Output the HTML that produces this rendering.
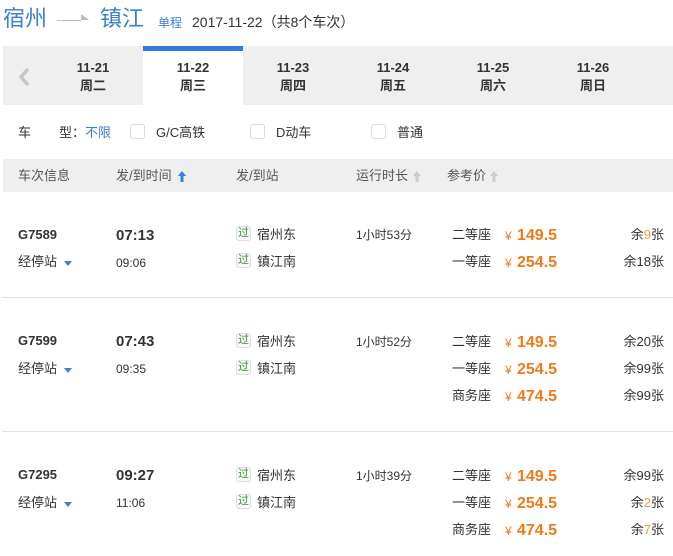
<!DOCTYPE html>
<html><head><meta charset="utf-8"><style>
*{margin:0;padding:0;box-sizing:border-box}
body{width:673px;height:556px;background:#fff;position:relative;overflow:hidden;font-family:"Liberation Sans","Noto Sans CJK SC",sans-serif;color:#333;font-size:13px}
.a{position:absolute;white-space:nowrap;line-height:16px}
.b{font-weight:bold}
.p{color:#f07a1a;font-weight:bold;font-size:16px;margin-top:2px}
.y{color:#f07a1a;font-size:12px}
.g{color:#f0a030}
.bx{position:absolute;width:15px;height:15px;border:1px solid #ddd;border-radius:3px;background:#fff}
.gu{position:absolute;width:15px;height:15px;border:1px solid #ddd;border-radius:3px;color:#2a9a2a;font-size:11px;line-height:13px;text-align:center;background:#fafafa}
.tri{position:absolute;width:0;height:0;border-left:4px solid transparent;border-right:4px solid transparent;border-top:5px solid #3b7fd8}
.hr{position:absolute;left:2px;right:0;height:1px;background:#e2e2e2}
.up{position:absolute;width:8px;height:11px}
.tm{margin-top:2px}
</style></head><body>
<div class="a" style="left:3px;top:6px;font-size:22px;line-height:26px;color:#3b7fd0">宿州</div>
<div style="position:absolute;left:57px;top:20px;width:24px;height:1px;background:#bbb"></div>
<div style="position:absolute;left:81px;top:14px;width:0;height:0;border-left:8px solid #bbb;border-top:6px solid transparent"></div>
<div class="a" style="left:100px;top:6px;font-size:22px;line-height:26px;color:#3b7fd0">镇江</div>
<div class="a" style="left:158px;top:15px;font-size:12px;color:#3b7fd0">单程</div>
<div class="a" style="left:192px;top:14px;font-size:14px;color:#333">2017-11-22（共8个车次）</div>

<div style="position:absolute;left:3px;top:46px;width:670px;height:59px;background:#efefef"></div>
<div style="position:absolute;left:143px;top:46px;width:100px;height:60px;background:#fff;border-top:5px solid #2f7fd8"></div>
<svg style="position:absolute;left:17px;top:66px" width="14" height="22"><path d="M11 3 L4 11 L11 19" stroke="#c6c6c6" stroke-width="3.5" fill="none"/></svg>
<div class="a b" style="left:73px;top:59px;width:40px;text-align:center;color:#333">11-21<br>周二</div>
<div class="a b" style="left:173px;top:59px;width:40px;text-align:center">11-22<br>周三</div>
<div class="a b" style="left:273px;top:59px;width:40px;text-align:center">11-23<br>周四</div>
<div class="a b" style="left:373px;top:59px;width:40px;text-align:center">11-24<br>周五</div>
<div class="a b" style="left:473px;top:59px;width:40px;text-align:center">11-25<br>周六</div>
<div class="a b" style="left:573px;top:59px;width:40px;text-align:center">11-26<br>周日</div>
<style>.a.b{line-height:18px}</style>

<div class="a" style="left:18px;top:125px">车</div>
<div class="a" style="left:59px;top:125px">型：<span style="color:#3b7fd0">不限</span></div>
<div class="bx" style="left:130px;top:124px"></div>
<div class="a" style="left:156px;top:125px">G/C高铁</div>
<div class="bx" style="left:250px;top:124px"></div>
<div class="a" style="left:276px;top:125px">D动车</div>
<div class="bx" style="left:371px;top:124px"></div>
<div class="a" style="left:397px;top:125px">普通</div>

<div style="position:absolute;left:3px;top:159px;width:670px;height:33px;background:#efefef"></div>
<div class="a" style="left:18px;top:168px;color:#555">车次信息</div>
<div class="a" style="left:116px;top:168px;color:#555">发/到时间</div>
<svg class="up" style="left:178px;top:171px"><path d="M4 0 L8 5 L5.5 5 L5.5 11 L2.5 11 L2.5 5 L0 5Z" fill="#3b7fd8"/></svg>
<div class="a" style="left:236px;top:168px;color:#555">发/到站</div>
<div class="a" style="left:356px;top:168px;color:#555">运行时长</div>
<svg class="up" style="left:413px;top:171px"><path d="M4 0 L8 5 L5.5 5 L5.5 11 L2.5 11 L2.5 5 L0 5Z" fill="#ccc"/></svg>
<div class="a" style="left:447px;top:168px;color:#555">参考价</div>
<svg class="up" style="left:490px;top:171px"><path d="M4 0 L8 5 L5.5 5 L5.5 11 L2.5 11 L2.5 5 L0 5Z" fill="#ccc"/></svg>

<!-- row1 -->
<div class="a" style="left:18px;top:227px;font-weight:bold;font-size:13px">G7589</div>
<div class="a" style="left:18px;top:254px">经停站</div><div class="tri" style="left:64px;top:261px"></div>
<div class="a tm" style="left:116px;top:226px;font-weight:bold;font-size:15px">07:13</div>
<div class="a" style="left:116px;top:255px;font-size:12px">09:06</div>
<div class="gu" style="left:236px;top:226px">过</div><div class="a" style="left:257px;top:227px">宿州东</div>
<div class="gu" style="left:236px;top:253px">过</div><div class="a" style="left:257px;top:254px">镇江南</div>
<div class="a" style="left:356px;top:227px;font-size:12px">1小时53分</div>
<div class="a" style="left:452px;top:227px">二等座</div><div class="a y" style="left:505px;top:228px">¥</div><div class="a p" style="left:517px;top:226px">149.5</div><div class="a" style="right:9px;top:227px">余<span class="g">9</span>张</div>
<div class="a" style="left:452px;top:254px">一等座</div><div class="a y" style="left:505px;top:255px">¥</div><div class="a p" style="left:517px;top:253px">254.5</div><div class="a" style="right:9px;top:254px">余18张</div>
<div class="hr" style="top:297px"></div>

<!-- row2 -->
<div class="a" style="left:18px;top:333px;font-weight:bold">G7599</div>
<div class="a" style="left:18px;top:361px">经停站</div><div class="tri" style="left:64px;top:368px"></div>
<div class="a tm" style="left:116px;top:332px;font-weight:bold;font-size:15px">07:43</div>
<div class="a" style="left:116px;top:361px;font-size:12px">09:35</div>
<div class="gu" style="left:236px;top:333px">过</div><div class="a" style="left:257px;top:334px">宿州东</div>
<div class="gu" style="left:236px;top:360px">过</div><div class="a" style="left:257px;top:361px">镇江南</div>
<div class="a" style="left:356px;top:334px;font-size:12px">1小时52分</div>
<div class="a" style="left:452px;top:334px">二等座</div><div class="a y" style="left:505px;top:335px">¥</div><div class="a p" style="left:517px;top:333px">149.5</div><div class="a" style="right:9px;top:334px">余20张</div>
<div class="a" style="left:452px;top:361px">一等座</div><div class="a y" style="left:505px;top:362px">¥</div><div class="a p" style="left:517px;top:360px">254.5</div><div class="a" style="right:9px;top:361px">余99张</div>
<div class="a" style="left:452px;top:388px">商务座</div><div class="a y" style="left:505px;top:389px">¥</div><div class="a p" style="left:517px;top:387px">474.5</div><div class="a" style="right:9px;top:388px">余99张</div>
<div class="hr" style="top:431px"></div>

<!-- row3 -->
<div class="a" style="left:18px;top:467px;font-weight:bold">G7295</div>
<div class="a" style="left:18px;top:495px">经停站</div><div class="tri" style="left:64px;top:502px"></div>
<div class="a tm" style="left:116px;top:466px;font-weight:bold;font-size:15px">09:27</div>
<div class="a" style="left:116px;top:495px;font-size:12px">11:06</div>
<div class="gu" style="left:236px;top:467px">过</div><div class="a" style="left:257px;top:468px">宿州东</div>
<div class="gu" style="left:236px;top:494px">过</div><div class="a" style="left:257px;top:495px">镇江南</div>
<div class="a" style="left:356px;top:468px;font-size:12px">1小时39分</div>
<div class="a" style="left:452px;top:468px">二等座</div><div class="a y" style="left:505px;top:469px">¥</div><div class="a p" style="left:517px;top:467px">149.5</div><div class="a" style="right:9px;top:468px">余99张</div>
<div class="a" style="left:452px;top:495px">一等座</div><div class="a y" style="left:505px;top:496px">¥</div><div class="a p" style="left:517px;top:494px">254.5</div><div class="a" style="right:9px;top:495px">余<span class="g">2</span>张</div>
<div class="a" style="left:452px;top:522px">商务座</div><div class="a y" style="left:505px;top:523px">¥</div><div class="a p" style="left:517px;top:521px">474.5</div><div class="a" style="right:9px;top:522px">余<span class="g">7</span>张</div>
</body></html>
